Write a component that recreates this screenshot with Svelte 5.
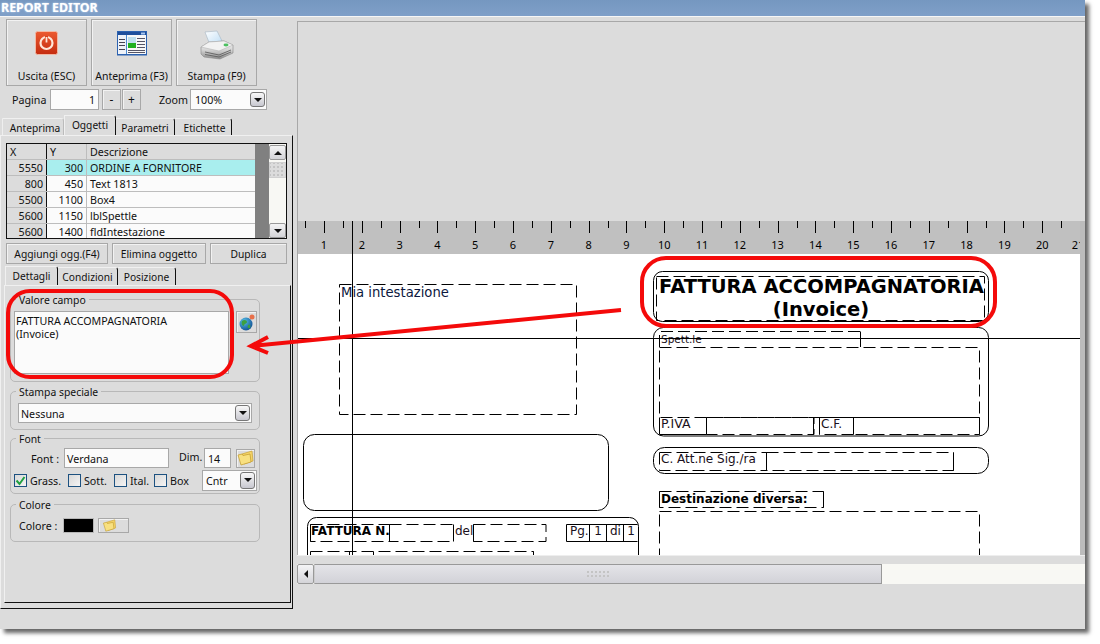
<script>
  const rows = [
    { x: 5550, y: 300, d: 'ORDINE A FORNITORE', sel: true },
    { x: 800, y: 450, d: 'Text 1813' },
    { x: 5500, y: 1100, d: 'Box4' },
    { x: 5600, y: 1150, d: 'lblSpettle' },
    { x: 5600, y: 1400, d: 'fldIntestazione' }
  ];
  const checks = [
    { label: 'Grass.', on: true, w: 54 },
    { label: 'Sott.', w: 46 },
    { label: 'Ital.', w: 40 },
    { label: 'Box', w: 0 }
  ];
  const step = 37.8;
  const org = 286.2;
  const nums = Array.from({ length: 21 }, (_, i) => i + 1);
</script>

<div class="window">
  <div class="title">REPORT EDITOR</div>
  <div class="body">
    <div class="left">
      <div class="toolbar">
        <button class="tool">
          <svg width="26" height="26" viewBox="0 0 26 26">
            <defs><linearGradient id="rd" x1="0" y1="0" x2="0" y2="1"><stop offset="0" stop-color="#ec5a30"/><stop offset="1" stop-color="#c42c10"/></linearGradient></defs>
            <rect x="1.5" y="1.5" width="22" height="23" rx="2" fill="url(#rd)" stroke="#f2b8a4"/>
            <circle cx="12.5" cy="13" r="6" fill="none" stroke="#ffe6d8" stroke-width="2.2"/>
            <rect x="11" y="6" width="3" height="7" fill="#d8401c"/>
            <rect x="11.6" y="7" width="1.8" height="5.5" fill="#ffe6d8"/>
          </svg>
          <span>Uscita (ESC)</span>
        </button>
        <button class="tool">
          <svg width="32" height="26" viewBox="0 0 32 26">
            <rect x="1" y="1" width="30" height="24.500" fill="#2c62b0"/>
            <rect x="2" y="2" width="28" height="3" fill="#1f4f9c"/>
            <rect x="25" y="2.500" width="4" height="2" fill="#a8c8f0"/>
            <rect x="2" y="5" width="28" height="19" fill="#f8f8f8"/>
            <rect x="2" y="5" width="8" height="19" fill="#eef2f8"/>
            <rect x="10" y="5" width="1" height="19" fill="#4a8ad0"/>
            <rect x="3" y="9" width="6" height="1" fill="#445"/><rect x="3" y="12" width="6" height="1" fill="#445"/><rect x="3" y="15" width="6" height="1" fill="#445"/><rect x="3" y="19" width="6" height="1" fill="#445"/>
            <rect x="12" y="7" width="8" height="6" fill="#bfe0ee"/>
            <rect x="12" y="13" width="8" height="5" fill="#20b020"/>
            <rect x="21" y="8" width="8" height="1" fill="#556"/><rect x="21" y="11" width="8" height="1" fill="#556"/><rect x="21" y="14" width="8" height="1" fill="#556"/><rect x="21" y="17" width="8" height="1" fill="#556"/>
            <rect x="12" y="20" width="17" height="1" fill="#556"/><rect x="12" y="22" width="17" height="1" fill="#556"/>
          </svg>
          <span>Anteprima (F3)</span>
        </button>
        <button class="tool">
          <svg width="34" height="30" viewBox="0 0 34 30">
            <defs>
              <linearGradient id="pr" x1="0" y1="0" x2="0" y2="1"><stop offset="0" stop-color="#f8f8f8"/><stop offset="0.5" stop-color="#d4d4d4"/><stop offset="1" stop-color="#8a8a8a"/></linearGradient>
              <linearGradient id="pp" x1="0" y1="0" x2="1" y2="1"><stop offset="0" stop-color="#ffffff"/><stop offset="1" stop-color="#bcdcf4"/></linearGradient>
            </defs>
            <path d="M5 2 L17 1 L22 11 L10 15 Z" fill="url(#pp)" stroke="#9ab" stroke-width=".5"/>
            <path d="M1 17 L9 12 L24 11 L33 15 L33 23 L20 29 L4 27 L1 24 Z" fill="url(#pr)" stroke="#888" stroke-width=".6"/>
            <path d="M1 17 L19 21 L33 15 L24 11 L9 12 Z" fill="#f2f2f2" stroke="#aaa" stroke-width=".5"/>
            <path d="M5 22 L19 25 L31 20 M5 24.500 L19 27 L31 22" fill="none" stroke="#555" stroke-width=".8"/>
            <ellipse cx="26" cy="15" rx="2.500" ry="1.400" fill="#4cc060"/>
          </svg>
          <span>Stampa (F9)</span>
        </button>
      </div>

      <div class="pager">
        <span class="lbl-pagina">Pagina</span>
        <div class="field page-input">1</div>
        <button class="mini">-</button>
        <button class="mini">+</button>
        <span class="lbl-zoom">Zoom</span>
        <div class="field zoom-sel"><span>100%</span><i class="drop"></i></div>
      </div>

      <div class="tabs outer-tabs">
        <div class="tab t1">Anteprima</div>
        <div class="tab on t2">Oggetti</div>
        <div class="tab t3">Parametri</div>
        <div class="tab t4">Etichette</div>
      </div>

      <div class="panel">
        <div class="grid">
          <div class="table">
            <div class="row head">
              <div class="c cx">X</div><div class="c cy">Y</div><div class="c cd">Descrizione</div>
            </div>
            {#each rows as r}
              <div class="row" class:sel={r.sel}>
                <div class="c cx num">{r.x}</div><div class="c cy num">{r.y}</div><div class="c cd">{r.d}</div>
              </div>
            {/each}
          </div>
          <div class="strip"></div>
          <div class="vscroll">
            <div class="sb up"><i class="arrow-up"></i></div>
            <div class="thumb"></div>
            <div class="sb down"><i class="arrow-down"></i></div>
          </div>
        </div>

        <div class="actions">
          <button class="act a1">Aggiungi ogg.(F4)</button>
          <button class="act a2">Elimina oggetto</button>
          <button class="act a3">Duplica</button>
        </div>

        <div class="tabs inner-tabs">
          <div class="tab on s1">Dettagli</div>
          <div class="tab s2">Condizioni</div>
          <div class="tab s3">Posizione</div>
        </div>

        <div class="inner">
          <div class="group g1">
            <span class="legend">Valore campo</span>
            <div class="valrow">
              <div class="memo">FATTURA ACCOMPAGNATORIA<br />(Invoice)</div>
              <button class="globe">
                <svg width="16" height="17" viewBox="0 0 16 17">
                  <defs><radialGradient id="gl" cx=".35" cy=".3" r=".8"><stop offset="0" stop-color="#58c0e8"/><stop offset="1" stop-color="#0c4a90"/></radialGradient></defs>
                  <circle cx="7" cy="10" r="6.500" fill="url(#gl)"/>
                  <path d="M3 7 C5 5 8 6 8 8 C8 10 5 9 5 12 C3 12 2 9 3 7 Z M9 11 C11 10 12 11 11 14 C9 15 8 13 9 11 Z" fill="#3ca040"/>
                  <circle cx="13" cy="3" r="2.500" fill="#e8704a"/>
                </svg>
              </button>
            </div>
          </div>

          <div class="group g2">
            <span class="legend">Stampa speciale</span>
            <div class="field nessuna"><span>Nessuna</span><i class="drop"></i></div>
          </div>

          <div class="group g3">
            <span class="legend">Font</span>
            <div class="frow">
              <span class="lbl-font">Font :</span>
              <div class="field fname">Verdana</div>
              <span class="lbl-dim">Dim.</span>
              <div class="field fdim">14</div>
              <button class="folder-btn fb1">
                <svg width="17" height="16" viewBox="0 0 17 16"><path d="M5 4 L15 1 L16 11 L7 14 Z" fill="#f4d468" stroke="#c8a030" stroke-width=".7"/><path d="M1 5 L5 4 L6 5.500 L13 4 L14 12 L4 15 Z" fill="#f8e080" stroke="#c09828" stroke-width=".7"/></svg>
              </button>
            </div>
            <div class="crow">
              {#each checks as c}
                <label class="chk" style="width: {c.w ? c.w + 'px' : 'auto'}">
                  <span class="box">
                    {#if c.on}<svg width="11" height="11" viewBox="0 0 11 11"><path d="M1.500 5.500 L4.500 9 L9.500 2" fill="none" stroke="#20a040" stroke-width="2"/></svg>{/if}
                  </span>
                  <span>{c.label}</span>
                </label>
              {/each}
              <div class="field align"><span>Cntr</span><i class="drop"></i></div>
            </div>
          </div>

          <div class="group g4">
            <span class="legend">Colore</span>
            <div class="colrow">
              <span>Colore :</span>
              <div class="swatch"></div>
              <button class="folder-btn fb2">
                <svg width="15" height="13" viewBox="0 0 17 16"><path d="M5 4 L15 1 L16 11 L7 14 Z" fill="#f4d468" stroke="#c8a030" stroke-width=".7"/><path d="M1 5 L5 4 L6 5.500 L13 4 L14 12 L4 15 Z" fill="#f8e080" stroke="#c09828" stroke-width=".7"/></svg>
              </button>
            </div>
          </div>
        </div>
      </div>
    </div>

    <div class="right">
      <div class="top-area"></div>
      <div class="canvas-wrap">
        <svg class="canvas" width="782" height="334" viewBox="298 221 782 334">
          <rect x="298" y="254" width="782" height="301" fill="#fff" />
          <rect x="298" y="221" width="782" height="33" fill="#c0c0c0" />
          {#each nums as n}
            <line x1={Math.round(org + n * step) + 0.5} x2={Math.round(org + n * step) + 0.5} y1="221" y2="233" class="ln" />
            <line x1={Math.round(org + (n - 0.5) * step) + 0.5} x2={Math.round(org + (n - 0.5) * step) + 0.5} y1="221" y2="228" class="ln" />
            <text x={org + n * step + (n > 20 ? -2 : 0)} y="249" text-anchor="middle" class="rn">{n}</text>
          {/each}

          <g>
            <rect x="339.500" y="284.500" width="237" height="130" class="dash" />
            <rect x="303.500" y="434.500" width="305" height="76" rx="11" class="solid" />
            <rect x="307.500" y="517.500" width="331" height="60" rx="9" class="solid" />

            <rect x="653.500" y="271.500" width="335" height="50" rx="9" class="solid" />
            <rect x="656.500" y="276.500" width="328" height="44" class="dash" />

            <rect x="653.500" y="327.500" width="335" height="108.500" rx="10" class="solid" />
            <path d="M659.500 347 V331.500 H860.500 V347" class="dash" />
            <line x1="860.500" x2="860.500" y1="331.500" y2="347" class="ln" />
            <rect x="659.500" y="347.500" width="320" height="70" class="dash" />
            <path d="M659.500 417.500 V434.500 H706.500" class="ln nofill" />
            <rect x="706.500" y="417.500" width="107.500" height="17" class="dash" />
            <line x1="706.500" x2="706.500" y1="417.500" y2="434.500" class="ln" />
            <line x1="813.500" x2="813.500" y1="417.500" y2="434.500" class="ln" />
            <rect x="819.500" y="417.500" width="34" height="17" class="dash" />
            <line x1="819.500" x2="819.500" y1="417.500" y2="434.500" class="ln" />
            <line x1="853.500" x2="853.500" y1="417.500" y2="434.500" class="ln" />
            <rect x="853.500" y="417.500" width="126" height="17" class="dash" />
            <line x1="979.500" x2="979.500" y1="417.500" y2="434.500" class="ln" />

            <rect x="653.500" y="447.500" width="335" height="26" rx="11" class="solid" />
            <rect x="659.500" y="452.500" width="107" height="18" class="dash" />
            <rect x="766.500" y="452.500" width="187" height="18" class="dash" />
            <line x1="766.500" x2="766.500" y1="452.500" y2="470.500" class="ln" />
            <line x1="953.500" x2="953.500" y1="452.500" y2="470.500" class="ln" />

            <rect x="659.500" y="491.500" width="164" height="16" class="dash" />
            <line x1="823.500" x2="823.500" y1="491.500" y2="507.500" class="ln" />
            <line x1="659.500" x2="659.500" y1="491.500" y2="507.500" class="ln" />
            <rect x="659.500" y="511.500" width="320" height="70" class="dash" />

            <rect x="310.500" y="524.500" width="79" height="17" class="dash" />
            <line x1="310.500" x2="310.500" y1="524.500" y2="541.500" class="ln" />
            <line x1="389.500" x2="389.500" y1="524.500" y2="541.500" class="ln" />
            <rect x="389.500" y="524.500" width="64" height="17" class="dash" />
            <line x1="453.500" x2="453.500" y1="524.500" y2="541.500" class="ln" />
            <line x1="473.500" x2="473.500" y1="524.500" y2="541.500" class="ln" />
            <rect x="473.500" y="524.500" width="72.500" height="17" class="dash" />
            <path d="M566.500 541.500 V524.500 H637.500 M566.500 541.500 H637.500" class="ln nofill" />
            <line x1="589.500" x2="589.500" y1="524.500" y2="541.500" class="ln" />
            <line x1="606.500" x2="606.500" y1="524.500" y2="541.500" class="ln" />
            <line x1="623.500" x2="623.500" y1="524.500" y2="541.500" class="ln" />

            <rect x="310.500" y="551.500" width="223" height="20" class="dash" />
            <line x1="349.500" x2="349.500" y1="551.500" y2="555" class="ln" />
            <line x1="373.500" x2="373.500" y1="551.500" y2="555" class="ln" />
            <line x1="533.500" x2="533.500" y1="551.500" y2="555" class="ln" />
          </g>

          <text x="341" y="297" class="t13">Mia intestazione</text>
          <text x="821.500" y="293" text-anchor="middle" class="big">FATTURA ACCOMPAGNATORIA</text>
          <text x="821" y="316" text-anchor="middle" class="big">(Invoice)</text>
          <text x="661" y="343" class="t12 small">Spett.le</text>
          <text x="661" y="428" class="t12 mid">P.IVA</text>
          <text x="821" y="428" class="t12">C.F.</text>
          <text x="661" y="463" class="t12">C. Att.ne Sig./ra</text>
          <text x="661" y="503" class="t12 b">Destinazione diversa:</text>
          <text x="311" y="535" class="t12 b">FATTURA N.</text>
          <text x="455" y="535" class="t12">del</text>
          <text x="570" y="535" class="t12">Pg.</text>
          <text x="602" y="535" text-anchor="end" class="t12">1</text>
          <text x="610" y="535" class="t12">di</text>
          <text x="631" y="535" text-anchor="middle" class="t12">1</text>
          <text x="311" y="566" class="t12">For</text>

          <line x1="352.500" x2="352.500" y1="221" y2="555" class="ln" />
          <line x1="298" x2="1080" y1="338.500" y2="338.500" class="ln" />
        </svg>
      </div>
      <div class="gap"></div>
      <div class="hscroll">
        <div class="hbtn"><i class="arrow-left"></i></div>
        <div class="hthumb"><i class="grip"></i></div>
      </div>
    </div>
  </div>
</div>

<svg class="notes" width="1100" height="644" viewBox="0 0 1100 644">
  <rect x="8" y="291" width="224" height="86" rx="22" class="red" />
  <rect x="642" y="258" width="353" height="68" rx="24" class="red" />
  <path d="M621 310 L252 346 M268 337 L251 346 L268 353" class="red" />
</svg>

<style>
  :global(html), :global(body) {
    height: 644px;
    overflow: hidden;
  }
  :global(body) {
    margin: 0;
    background: #fff;
    font-family: "Noto Sans", "DejaVu Sans", sans-serif;
    font-size: 10.7px;
    color: #111;
  }
  button {
    font: inherit;
    color: inherit;
    margin: 0;
    padding: 0;
    background: #dcdcdc;
    border: 1px solid #a8a8a8;
    box-shadow: inset 1px 1px 0 #f2f2f2;
  }
  .window {
    width: 1085px;
    height: 629px;
    background: #dcdcdc;
    box-shadow: 4px 4px 4px rgba(0, 0, 0, 0.6);
    display: flex;
    flex-direction: column;
  }
  .title {
    height: 16px;
    line-height: 16px;
    background: linear-gradient(#7597c0, #7f9fc8);
    color: #fff;
    font-weight: 700;
    font-size: 12.4px;
    padding-left: 1px;
    box-sizing: border-box;
    text-shadow: 0 0 2px #cfe0f4;
    flex: none;
  }
  .body {
    flex: 1;
    display: flex;
    border-top: 1px solid #f6f6f6;
    min-height: 0;
  }
  .left {
    width: 297px;
    flex: none;
    display: flex;
    flex-direction: column;
  }
  .toolbar {
    display: flex;
    gap: 4px;
    padding: 2px 0 0 6px;
  }
  .tool {
    width: 81px;
    height: 67px;
    box-sizing: border-box;
    display: flex;
    flex-direction: column;
    align-items: center;
    position: relative;
    padding-top: 10px;
    font-size: 10.5px;
  }
  .tool span {
    position: absolute;
    top: 49px;
    left: 0;
    right: 0;
    text-align: center;
  }
  .pager {
    display: flex;
    align-items: center;
    height: 21px;
    margin-top: 3px;
  }
  .lbl-pagina { margin-left: 12px; width: 38px; padding-top: 1px; }
  .field {
    background: #fbfbfb;
    border: 1px solid #a8a8a8;
    box-sizing: border-box;
    display: flex;
    align-items: center;
    position: relative;
    padding-top: 1px;
  }
  .page-input { width: 49px; height: 21px; justify-content: flex-end; padding-right: 3px; }
  .mini { width: 19px; height: 21px; margin-left: 1px; font-size: 12px; }
  .mini:first-of-type { margin-left: 3px; }
  .lbl-zoom { margin-left: 18px; width: 31px; padding-top: 1px; }
  .zoom-sel { width: 77px; height: 21px; padding-left: 4px; }
  .drop {
    position: absolute;
    right: 1px;
    top: 2px;
    width: 15px;
    height: 15px;
    box-sizing: border-box;
    border: 1px solid #777;
    border-radius: 3px;
    background: linear-gradient(#f8f8f8, #c8c8d0);
  }
  .drop::after {
    content: "";
    position: absolute;
    left: 3px;
    top: 5px;
    border: 4px solid transparent;
    border-top: 4px solid #111;
    border-bottom: 0;
  }
  .tabs { display: flex; align-items: flex-end; font-size: 10.2px; }
  .outer-tabs { height: 20px; margin-top: 5px; padding-left: 2px; }
  .tab {
    height: 17px;
    box-sizing: border-box;
    text-align: center;
    line-height: 19px;
    border-right: 1px solid #111;
    border-radius: 0 3px 0 0;
    border-top: 1px solid #f0f0f0;
  }
  .tab.on { height: 20px; line-height: 19px; border-left: 1px solid #f0f0f0; }
  .t1 { width: 62px; border-right: 1px solid #bbb; border-left: 1px solid #eee; padding-left: 4px; }
  .t2 { width: 52px; }
  .t3 { width: 59px; }
  .t4 { width: 57px; padding-left: 3px; }
  .panel {
    width: 293px;
    height: 474px;
    box-sizing: border-box;
    border-right: 1px solid #111;
    border-bottom: 1px solid #111;
    border-left: 1px solid #f0f0f0;
    border-top: 1px solid #f0f0f0;
    padding-top: 7px;
    display: flex;
    flex-direction: column;
    flex: none;
  }
  .grid {
    width: 281px;
    height: 96px;
    margin-left: 5px;
    box-sizing: border-box;
    border: 1px solid #111;
    display: flex;
    flex: none;
    overflow: hidden;
  }
  .table { width: 248px; flex: none; }
  .row { display: flex; height: 16px; box-sizing: border-box; border-bottom: 1px solid #bdbdbd; background: #fbfbfb; }
  .row:last-child { border-bottom: 0; }
  .row.head { background: #dcdcdc; }
  .c {
    box-sizing: border-box;
    padding: 1px 3px 0;
    line-height: 15px;
    height: 15px;
    border-right: 1px solid #bdbdbd;
    white-space: nowrap;
  }
  .cx { width: 40px; background: #dcdcdc; border-right-color: #111; }
  .cy { width: 40px; }
  .cd { width: 168px; border-right: 0; }
  .num { text-align: right; }
  .row.sel .cy, .row.sel .cd { background: #a9eeee; }
  .strip { width: 14px; background: #808080; flex: none; }
  .vscroll {
    flex: 1;
    background: #f8f8f4;
    display: flex;
    flex-direction: column;
    position: relative;
  }
  .sb {
    height: 15px;
    border: 1px solid #999;
    box-sizing: border-box;
    border-radius: 2px;
    background: linear-gradient(#f4f4f4, #d4d4d8);
    display: flex;
    align-items: center;
    justify-content: center;
    margin-top: 1px;
  }
  .arrow-up { border: 4px solid transparent; border-bottom: 4px solid #111; border-top: 0; }
  .arrow-down { border: 4px solid transparent; border-top: 4px solid #111; border-bottom: 0; }
  .arrow-left { border: 4px solid transparent; border-right: 4px solid #111; border-left: 0; }
  .thumb {
    height: 16px;
    margin-top: 2px;
    background: radial-gradient(#c4c4c4 40%, transparent 45%) 2px 2px / 4px 4px, #dcdcdc;
    border: 1px solid #d0d0d0;
    box-sizing: border-box;
  }
  .down { margin-top: auto; margin-bottom: 0; }
  .actions { display: flex; gap: 4px; margin: 4px 0 0 5px; flex: none; }
  .act { height: 21px; box-sizing: border-box; font-size: 10.3px; }
  .a1 { width: 102px; }
  .a2 { width: 94px; }
  .a3 { width: 77px; }
  .inner-tabs { height: 19px; margin-top: 2px; padding-left: 4px; flex: none; }
  .s1 { width: 53px; }
  .s2 { width: 60px; }
  .s3 { width: 58px; }
  .inner-tabs .tab { height: 18px; }
  .inner-tabs .tab.s1 { height: 19px; line-height: 18px; }
  .inner {
    width: 287px;
    height: 318px;
    box-sizing: border-box;
    margin-left: 3px;
    border-right: 1px solid #111;
    border-bottom: 1px solid #111;
    border-left: 1px solid #f0f0f0;
    border-top: 1px solid #f0f0f0;
    padding: 13px 0 0 5px;
    flex: none;
  }
  .group {
    width: 250px;
    box-sizing: border-box;
    border: 1px solid #b8b8b8;
    border-radius: 5px;
    position: relative;
  }
  .legend {
    position: absolute;
    top: -6px;
    left: 5px;
    padding: 0 3px;
    line-height: 13px;
    background: #dcdcdc;
    font-size: 10.4px;
  }
  .g1 { height: 83px; padding: 11px 0 0 3px; }
  .g2 { height: 39px; margin-top: 9px; padding: 11px 0 0 7px; }
  .g3 { height: 56px; margin-top: 8px; padding: 9px 0 0 0; }
  .g4 { height: 38px; margin-top: 10px; padding: 13px 0 0 8px; }
  .valrow { display: flex; align-items: flex-start; }
  .memo {
    width: 215px;
    height: 63px;
    box-sizing: border-box;
    background: #fbfbfb;
    border: 1px solid #a8a8a8;
    padding: 3px 1px;
    line-height: 13px;
  }
  .globe { width: 21px; height: 22px; margin-left: 7px; display: flex; align-items: center; justify-content: center; }
  .nessuna { width: 234px; height: 20px; padding-left: 2px; }
  .nessuna .drop { right: 1px; top: 1px; height: 16px; }
  .frow { display: flex; align-items: center; height: 20px; }
  .lbl-font { margin-left: 20px; width: 33px; padding-top: 2px; }
  .fname { width: 105px; height: 20px; padding-left: 2px; }
  .lbl-dim { margin-left: 10px; width: 25px; margin-top: -2px; }
  .fdim { width: 27px; height: 20px; padding-left: 3px; }
  .folder-btn { display: flex; align-items: center; justify-content: center; }
  .fb1 { width: 19px; height: 19px; margin-left: 5px; }
  .crow { display: flex; align-items: center; height: 21px; margin-top: 2px; padding-left: 3px; position: relative; }
  .chk { display: flex; align-items: center; gap: 3px; }
  .box {
    width: 13px;
    height: 13px;
    box-sizing: border-box;
    border: 1px solid #1c5180;
    background: linear-gradient(135deg, #d8d8d8, #f4f4f4);
    display: flex;
    align-items: center;
    justify-content: center;
  }
  .align { width: 55px; height: 21px; padding-left: 3px; margin-left: auto; margin-right: 2px; }
  .align .drop { top: 1px; height: 17px; }
  .colrow { display: flex; align-items: center; height: 15px; }
  .swatch {
    width: 31px;
    height: 15px;
    box-sizing: border-box;
    background: #000;
    border: 1px solid #b8b8b8;
    margin-left: 6px;
  }
  .fb2 { width: 31px; height: 15px; margin-left: 4px; justify-content: flex-start; padding-left: 3px; }
  .right {
    flex: 1;
    min-width: 0;
    display: flex;
    flex-direction: column;
  }
  .top-area {
    height: 200px;
    margin-top: 4px;
    border-top: 1px solid #a8a8a8;
    border-left: 1px solid #a8a8a8;
    box-sizing: border-box;
    flex: none;
  }
  .canvas-wrap {
    height: 334px;
    background: #bcbcbc;
    border-left: 1px solid #a8a8a8;
    flex: none;
    overflow: hidden;
  }
  .canvas { display: block; }
  .ln { stroke: #000; stroke-width: 1; }
  .nofill { fill: none; }
  .solid { fill: none; stroke: #000; stroke-width: 1; }
  .dash { fill: none; stroke: #000; stroke-width: 1; stroke-dasharray: 12 5; }
  text { font-family: "DejaVu Sans", sans-serif; fill: #000; }
  .rn { font-family: "Noto Sans", sans-serif; font-size: 11px; }
  .t13 { font-size: 13.200px; fill: #0c1840; }
  .t12 { font-size: 12px; fill: #1a1020; }
  .small { font-size: 10.5px; }
  .mid { font-size: 12.5px; }
  .b { font-weight: 700; fill: #000; }
  .big { font-size: 19.500px; font-weight: 700; }
  .gap { height: 9px; flex: none; border-top: 1px solid #eee; box-sizing: border-box; }
  .hscroll {
    height: 20px;
    display: flex;
    background: #f8f8f4;
    flex: none;
  }
  .hbtn {
    width: 17px;
    box-sizing: border-box;
    border: 1px solid #999;
    border-radius: 2px;
    background: linear-gradient(#f4f4f6, #d4d4d8);
    display: flex;
    align-items: center;
    justify-content: center;
  }
  .hthumb {
    width: 568px;
    box-sizing: border-box;
    border: 1px solid #999;
    border-left: 1px solid #ccc;
    background: linear-gradient(#e4e4e8, #d2d2d8);
    display: flex;
    align-items: center;
    justify-content: center;
  }
  .grip {
    width: 24px;
    height: 8px;
    background: radial-gradient(#c4c4c4 40%, transparent 45%) 0 0 / 4px 4px;
  }
  .notes {
    position: absolute;
    left: 0;
    top: 0;
    pointer-events: none;
  }
  .red { fill: none; stroke: #f40a0a; stroke-width: 4; }
</style>
